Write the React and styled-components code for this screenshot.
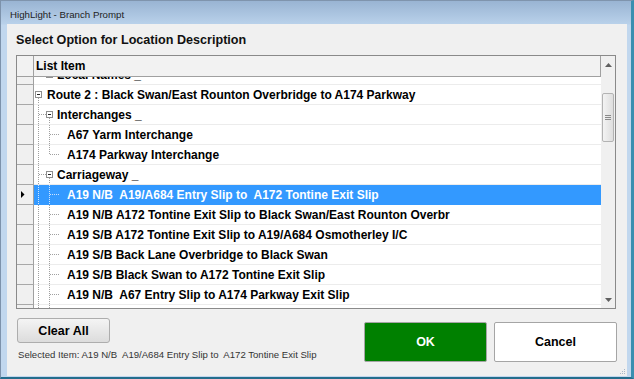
import React from 'react';
import styled, { createGlobalStyle } from 'styled-components';

const GlobalStyle = createGlobalStyle`
  html, body { margin: 0; padding: 0; background: #ffffff; }
  body { font-family: "Liberation Sans", Arial, sans-serif; }
  * { box-sizing: border-box; }
`;

const Window = styled.div`
  width: 634px;
  height: 379px;
  display: flex;
  flex-direction: column;
  border-left: 1px solid #7d92ab;
  border-top: 1px solid #7f94ad;
  border-right: 3px solid #3b8fb0;
  border-bottom: 2px solid #246d8c;
  background: linear-gradient(to bottom, #99b4d3 0px, #b9d1ea 23px, #c1d7ee 24px, #c1d7ee 100%);
`;

const TitleBar = styled.div`
  height: 23px;
  flex-shrink: 0;
  display: flex;
  align-items: center;
  padding: 3px 0 0 9px;
  font-size: 9.7px;
  color: #222;
`;

const Client = styled.div`
  position: relative;
  flex: 1;
  margin: 0 4px 1px 6px;
  background: #f0f0f0;
  display: flex;
  flex-direction: column;
  padding: 0 10px 0 9px;
`;

const Heading = styled.div`
  height: 31px;
  flex-shrink: 0;
  display: flex;
  align-items: center;
  font-size: 12.6px;
  font-weight: bold;
  color: #111;
`;

const Grid = styled.div`
  height: 254px;
  flex-shrink: 0;
  margin-right: 1px;
  display: flex;
  border: 1px solid #8a8a8a;
  background: #ffffff;
`;

const Main = styled.div`
  flex: 1;
  min-width: 0;
  display: flex;
  flex-direction: column;
`;

const HeaderRow = styled.div`
  height: 21px;
  flex-shrink: 0;
  display: flex;
  background: #f2f2f2;
  border-bottom: 1px solid #a0a0a0;
  border-right: 1px solid #a0a0a0;
`;

const HeaderCorner = styled.div`
  width: 17px;
  border-right: 1px solid #a0a0a0;
`;

const HeaderCell = styled.div`
  flex: 1;
  display: flex;
  align-items: center;
  padding-left: 2px;
  font-size: 12px;
  font-weight: bold;
  color: #000;
`;

const Body = styled.div`
  flex: 1;
  overflow: hidden;
  display: flex;
  flex-direction: column;
  & > :first-child { margin-top: -12px; }
`;

const Row = styled.div`
  height: 20px;
  flex-shrink: 0;
  display: flex;
`;

const RowHeader = styled.div`
  width: 17px;
  flex-shrink: 0;
  display: flex;
  align-items: center;
  background: #f0f0f0;
  border-right: 1px solid #a0a0a0;
  border-bottom: 1px solid #a8a8a8;
`;

const Cell = styled.div`
  flex: 1;
  min-width: 0;
  display: flex;
  align-items: center;
  overflow: hidden;
  white-space: pre;
  font-size: 12px;
  font-weight: bold;
  background: ${p => (p.$selected ? '#3399ff' : '#ffffff')};
  color: ${p => (p.$selected ? '#ffffff' : '#000000')};
  border-bottom: 1px solid ${p => (p.$selected ? '#3399ff' : '#ececec')};
`;

const Guide = styled.svg`
  flex-shrink: 0;
  display: block;
`;

const Scrollbar = styled.div`
  width: 14px;
  flex-shrink: 0;
  display: flex;
  flex-direction: column;
  background: #f0f0f0;
`;

const ArrowButton = styled.div`
  height: 17px;
  flex-shrink: 0;
  display: flex;
  align-items: center;
  justify-content: center;
`;

const Track = styled.div`
  flex: 1;
  padding-top: 20px;
`;

const Thumb = styled.div`
  margin: 0 1px;
  height: 49px;
  border: 1px solid #b3b3b3;
  border-radius: 2px;
  background: linear-gradient(to right, #f3f3f3, #dedede);
  display: flex;
  align-items: center;
  justify-content: center;
`;

const Footer = styled.div`
  flex: 1;
  display: flex;
  justify-content: space-between;
`;

const FooterLeft = styled.div`
  display: flex;
  flex-direction: column;
  align-items: flex-start;
  padding: 9px 0 0 1px;
`;

const ClearButton = styled.button`
  width: 93px;
  height: 25px;
  padding: 0;
  border: 1px solid #adadad;
  border-radius: 3px;
  background: linear-gradient(to bottom, #f4f4f4, #dcdcdc);
  font-family: "Liberation Sans", Arial, sans-serif;
  font-size: 12.5px;
  font-weight: bold;
  color: #000;
`;

const SelectedLabel = styled.div`
  margin-top: 6px;
  padding-left: 1px;
  font-size: 9.6px;
  line-height: 12px;
  color: #333;
  white-space: pre;
`;

const FooterRight = styled.div`
  display: flex;
  gap: 7px;
  padding-top: 13px;
`;

const DialogButton = styled.button`
  width: 123px;
  height: 40px;
  padding: 0;
  border: 1px solid #a5a5a5;
  border-radius: 2px;
  background: ${p => (p.$primary ? '#008000' : '#ffffff')};
  color: ${p => (p.$primary ? '#ffffff' : '#000000')};
  font-family: "Liberation Sans", Arial, sans-serif;
  font-size: 12.5px;
  font-weight: bold;
`;

const SizeGrip = styled.svg`
  position: absolute;
  right: 1px;
  bottom: 1px;
`;

const rows = [
  { level: 2, text: 'Local Names _', box: true },
  { level: 1, text: 'Route 2 : Black Swan/East Rounton Overbridge to A174 Parkway', box: true, below: true },
  { level: 2, text: 'Interchanges _', box: true, below: true, trunk: true },
  { level: 3, text: 'A67 Yarm Interchange', trunk: true },
  { level: 3, text: 'A174 Parkway Interchange', trunk: true, last: true },
  { level: 2, text: 'Carriageway _', box: true, below: true, trunk: true },
  { level: 3, text: 'A19 N/B  A19/A684 Entry Slip to  A172 Tontine Exit Slip', trunk: true, selected: true },
  { level: 3, text: 'A19 N/B A172 Tontine Exit Slip to Black Swan/East Rounton Overbr', trunk: true },
  { level: 3, text: 'A19 S/B A172 Tontine Exit Slip to A19/A684 Osmotherley I/C', trunk: true },
  { level: 3, text: 'A19 S/B Back Lane Overbridge to Black Swan', trunk: true },
  { level: 3, text: 'A19 S/B Black Swan to A172 Tontine Exit Slip', trunk: true },
  { level: 3, text: 'A19 N/B  A67 Entry Slip to A174 Parkway Exit Slip', trunk: true },
  { level: 3, text: '', trunk: true },
];

const widths = { 1: 13, 2: 23, 3: 33 };

function TreeGuide({ row }) {
  const w = widths[row.level];
  const line = row.selected ? '#cfe4ff' : '#a0a0a0';
  const dash = '1 1';
  const items = [];
  if (row.level === 1) {
    items.push(<rect key="b" x="1.5" y="6.5" width="6" height="6" fill="#fff" stroke="#8f8f8f" />);
    items.push(<line key="m" x1="3" y1="9.5" x2="6" y2="9.5" stroke="#222" />);
    if (row.below) items.push(<line key="d" x1="4.5" y1="13" x2="4.5" y2="19" stroke={line} strokeDasharray={dash} />);
  }
  if (row.level === 2) {
    if (row.trunk) {
      items.push(<line key="t" x1="4.5" y1="0" x2="4.5" y2="19" stroke={line} strokeDasharray={dash} />);
      items.push(<line key="s" x1="5" y1="9.5" x2="12" y2="9.5" stroke={line} strokeDasharray={dash} />);
    }
    items.push(<rect key="b" x="12.5" y="6.5" width="6" height="6" fill="#fff" stroke="#8f8f8f" />);
    items.push(<line key="m" x1="14" y1="9.5" x2="17" y2="9.5" stroke="#222" />);
    if (row.below) items.push(<line key="d" x1="15.5" y1="13" x2="15.5" y2="19" stroke={line} strokeDasharray={dash} />);
  }
  if (row.level === 3) {
    items.push(<line key="t" x1="4.5" y1="0" x2="4.5" y2="19" stroke={line} strokeDasharray={dash} />);
    items.push(<line key="v" x1="15.5" y1="0" x2="15.5" y2={row.last ? 9.5 : 19} stroke={line} strokeDasharray={dash} />);
    items.push(<line key="s" x1="16" y1="9.5" x2="26" y2="9.5" stroke={line} strokeDasharray={dash} />);
  }
  return (
    <Guide width={w} height="19" viewBox={`0 0 ${w} 19`}>
      {items}
    </Guide>
  );
}

export default function App() {
  return (
    <>
      <GlobalStyle />
      <Window>
        <TitleBar>HighLight - Branch Prompt</TitleBar>
        <Client>
          <Heading>Select Option for Location Description</Heading>
          <Grid>
            <Main>
              <HeaderRow>
                <HeaderCorner />
                <HeaderCell>List Item</HeaderCell>
              </HeaderRow>
              <Body>
                {rows.map((row, i) => (
                  <Row key={i}>
                    <RowHeader>
                      {row.selected && (
                        <svg width="16" height="19" viewBox="0 0 16 19">
                          <polygon points="4,6 7.5,9.5 4,13" fill="#000" />
                        </svg>
                      )}
                    </RowHeader>
                    <Cell $selected={row.selected}>
                      <TreeGuide row={row} />
                      {row.text}
                    </Cell>
                  </Row>
                ))}
              </Body>
            </Main>
            <Scrollbar>
              <ArrowButton>
                <svg width="7" height="4" viewBox="0 0 7 4">
                  <polygon points="0,4 3.5,0 7,4" fill="#606060" />
                </svg>
              </ArrowButton>
              <Track>
                <Thumb>
                  <svg width="6" height="5" viewBox="0 0 6 5">
                    <line x1="0" y1="0.5" x2="6" y2="0.5" stroke="#8a8a8a" />
                    <line x1="0" y1="2.5" x2="6" y2="2.5" stroke="#8a8a8a" />
                    <line x1="0" y1="4.5" x2="6" y2="4.5" stroke="#8a8a8a" />
                  </svg>
                </Thumb>
              </Track>
              <ArrowButton>
                <svg width="7" height="4" viewBox="0 0 7 4">
                  <polygon points="0,0 3.5,4 7,0" fill="#606060" />
                </svg>
              </ArrowButton>
            </Scrollbar>
          </Grid>
          <Footer>
            <FooterLeft>
              <ClearButton>Clear All</ClearButton>
              <SelectedLabel>Selected Item: A19 N/B  A19/A684 Entry Slip to  A172 Tontine Exit Slip</SelectedLabel>
            </FooterLeft>
            <FooterRight>
              <DialogButton $primary>OK</DialogButton>
              <DialogButton>Cancel</DialogButton>
            </FooterRight>
          </Footer>
          <SizeGrip width="7" height="7" viewBox="0 0 7 7">
            <rect x="5" y="1" width="1" height="1" fill="#a8b8c8" />
            <rect x="3" y="3" width="1" height="1" fill="#a8b8c8" />
            <rect x="5" y="3" width="1" height="1" fill="#a8b8c8" />
            <rect x="1" y="5" width="1" height="1" fill="#a8b8c8" />
            <rect x="3" y="5" width="1" height="1" fill="#a8b8c8" />
            <rect x="5" y="5" width="1" height="1" fill="#a8b8c8" />
          </SizeGrip>
        </Client>
      </Window>
    </>
  );
}
